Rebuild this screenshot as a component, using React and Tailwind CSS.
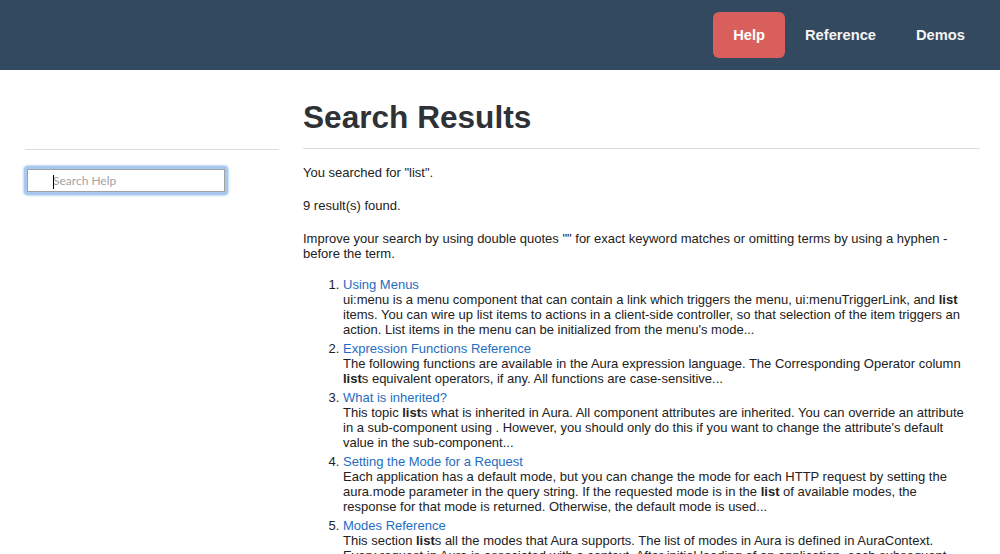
import React from "react";

const items = [
  {
    title: "Using Menus",
    lines: [
      <>ui:menu is a menu component that can contain a link which triggers the menu, ui:menuTriggerLink, and <b>list</b></>,
      <>items. You can wire up list items to actions in a client-side controller, so that selection of the item triggers an</>,
      <>action. List items in the menu can be initialized from the menu's mode...</>,
    ],
  },
  {
    title: "Expression Functions Reference",
    lines: [
      <>The following functions are available in the Aura expression language. The Corresponding Operator column</>,
      <><b>list</b>s equivalent operators, if any. All functions are case-sensitive...</>,
    ],
  },
  {
    title: "What is inherited?",
    lines: [
      <>This topic <b>list</b>s what is inherited in Aura. All component attributes are inherited. You can override an attribute</>,
      <>in a sub-component using . However, you should only do this if you want to change the attribute's default</>,
      <>value in the sub-component...</>,
    ],
  },
  {
    title: "Setting the Mode for a Request",
    lines: [
      <>Each application has a default mode, but you can change the mode for each HTTP request by setting the</>,
      <>aura.mode parameter in the query string. If the requested mode is in the <b>list</b> of available modes, the</>,
      <>response for that mode is returned. Otherwise, the default mode is used...</>,
    ],
  },
  {
    title: "Modes Reference",
    lines: [
      <>This section <b>list</b>s all the modes that Aura supports. The list of modes in Aura is defined in AuraContext.</>,
      <>Every request in Aura is associated with a context. After initial loading of an application, each subsequent</>,
      <>request uses the mode that the context is in...</>,
    ],
  },
];

export default function App() {
  return (
    <div className="min-h-[554px] bg-white font-['Liberation_Sans',Arial,sans-serif] text-[13px] leading-[15px] text-[#222]">
      <header className="h-[70px] bg-[#33495f] flex justify-end items-center pr-[15px]">
        <nav className="flex items-center">
          <a className="h-[46px] px-5 flex items-center rounded-[6px] bg-[#d95f5c] text-white font-bold text-[14.7px]">Help</a>
          <a className="h-[46px] px-5 flex items-center text-[#f4f4f4] font-bold text-[14.7px]">Reference</a>
          <a className="h-[46px] px-5 flex items-center text-[#f4f4f4] font-bold text-[14.7px]">Demos</a>
        </nav>
      </header>
      <div className="flex pl-[25px] gap-[24px]">
        <aside className="w-[254px] pt-[79px] shrink-0">
          <div className="h-px bg-[#dcdcdc]" />
          <div className="mt-[16px] ml-[-1px] w-[204px] h-[29px] p-[3px] rounded-[4px] bg-[#a9c8ef] shadow-[0_0_2px_1px_#c4daf5]">
            <div className="relative h-full bg-white border border-[#a0a0a0] flex items-center pl-[25px]">
              <span className="absolute left-[25px] top-[5px] w-px h-[14px] bg-black" />
              <span className="text-[12px] text-[#a3a3a3] font-['Lato',sans-serif]">Search Help</span>
            </div>
          </div>
        </aside>
        <main className="w-[677px] shrink-0 pt-[28px]">
          <h1 className="text-[31.6px] leading-[38px] font-bold text-[#2e3236] mb-[12px]">Search Results</h1>
          <div className="h-px bg-[#dcdcdc]" />
          <p className="mt-[16px]">You searched for "list".</p>
          <p className="mt-[18px]">9 result(s) found.</p>
          <p className="mt-[18px]">
            Improve your search by using double quotes "" for exact keyword matches or omitting terms by using a hyphen -
            <br />
            before the term.
          </p>
          <ol className="mt-[16px] list-decimal pl-[40px]">
            {items.map((it) => (
              <li key={it.title} className="mb-[4px]">
                <a className="text-[#1e6dc2]">{it.title}</a>
                <div className="whitespace-nowrap">
                  {it.lines.map((l, i) => (
                    <React.Fragment key={i}>
                      {l}
                      <br />
                    </React.Fragment>
                  ))}
                </div>
              </li>
            ))}
          </ol>
        </main>
      </div>
    </div>
  );
}
